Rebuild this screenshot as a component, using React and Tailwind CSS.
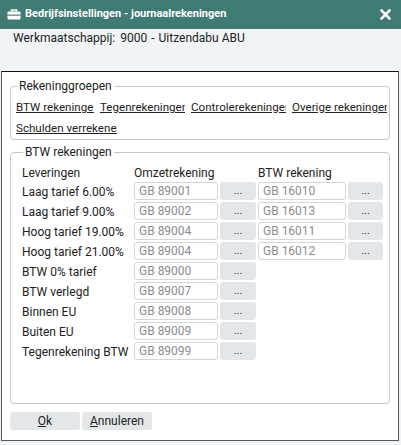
import React from "react";

const rows = [
  ["Laag tarief 6.00%", "GB 89001", "GB 16010"],
  ["Laag tarief 9.00%", "GB 89002", "GB 16013"],
  ["Hoog tarief 19.00%", "GB 89004", "GB 16011"],
  ["Hoog tarief 21.00%", "GB 89004", "GB 16012"],
  ["BTW 0% tarief", "GB 89000", null],
  ["BTW verlegd", "GB 89007", null],
  ["Binnen EU", "GB 89008", null],
  ["Buiten EU", "GB 89009", null],
  ["Tegenrekening BTW", "GB 89099", null],
];

function Input({ value, w }) {
  return (
    <div
      className={`${w} h-[18px] border border-[#d4d7da] rounded-[3px] bg-white pl-[4px] text-[#8a8d90] leading-[16px] text-[12px]`}
    >
      {value}
    </div>
  );
}

function Dots({ w }) {
  return (
    <div className={`${w} h-[18px] rounded-[3px] bg-[#e3e7ea] flex items-center justify-center text-[#333] text-[11px] leading-[16px]`}>
      ...
    </div>
  );
}

function Link({ w, children }) {
  return (
    <span className={`${w} inline-block overflow-hidden whitespace-nowrap underline text-[#222] leading-[16px] text-[11.6px]`}>
      {children}
    </span>
  );
}

export default function App() {
  return (
    <div
      className="w-[401px] h-[445px] bg-[#f1f4f7] text-[12px] text-[#222] overflow-hidden"
      style={{ fontFamily: "Roboto, 'Liberation Sans', sans-serif" }}
    >
      <div className="h-[29px] bg-[#3f7a73] flex items-center pl-[7px] pr-[10px] text-white">
        <svg width="14" height="11" viewBox="0 0 14 11" className="mr-[4px]">
          <path d="M4.5 2.5 V1 H9.5 V2.5" fill="none" stroke="white" strokeWidth="1.6" />
          <rect x="0.5" y="2.5" width="13" height="8" rx="1" fill="white" />
          <rect x="0.5" y="5.6" width="13" height="1.1" fill="#3f7a73" />
        </svg>
        <span className="font-bold text-[11px] flex-1">Bedrijfsinstellingen - journaalrekeningen</span>
        <svg width="11" height="11" viewBox="0 0 11 11">
          <path d="M1.5 1.5 L9.5 9.5 M9.5 1.5 L1.5 9.5" stroke="white" strokeWidth="2.6" strokeLinecap="square" />
        </svg>
      </div>
      <div className="h-[42px] pl-[13px] pt-[1px] leading-[16px] flex text-[#222]">
        <span>Werkmaatschappij:</span>
        <span className="ml-[5px]">9000</span>
        <span className="ml-[4px]">-</span>
        <span className="ml-[4px]">Uitzendabu ABU</span>
      </div>
      <div className="ml-[1px] w-[398px] h-[370px] border border-[#555] border-t-[#111] bg-white px-[8px] pt-[6px]">
        <fieldset className="h-[62px] border border-[#c8c8c8] rounded-[4px] pl-[5px] pr-[2px]">
          <legend className="px-[2px] ml-[1px] leading-[16px]">Rekeninggroepen</legend>
          <div className="flex gap-[6px] mt-[5px]">
            <Link w="w-[78px]">BTW rekeningen</Link>
            <Link w="w-[85px]">Tegenrekeningen</Link>
            <Link w="w-[95px]">Controlerekeningen</Link>
            <Link w="w-[95px]">Overige rekeningen</Link>
          </div>
          <div className="flex mt-[5px]">
            <Link w="w-[101px]">Schulden verrekenen</Link>
          </div>
        </fieldset>
        <fieldset className="mt-[4px] h-[260px] border border-[#c8c8c8] rounded-[4px] pl-[11px]">
          <legend className="px-[2px] ml-[1px] leading-[16px]">BTW rekeningen</legend>
          <div className="flex mt-[5px] leading-[16px]">
            <div className="w-[112px]">Leveringen</div>
            <div className="w-[124px]">Omzetrekening</div>
            <div>BTW rekening</div>
          </div>
          <div className="flex flex-col gap-[2px] mt-[1px]">
            {rows.map(([label, a, b]) => (
              <div key={label} className="flex items-center gap-[2px] h-[18px]">
                <div className="w-[110px] leading-[16px] pt-[1px] whitespace-nowrap">{label}</div>
                <Input value={a} w="w-[84px]" />
                <Dots w="w-[36px]" />
                {b && <Input value={b} w="w-[88px]" />}
                {b && <Dots w="w-[35px]" />}
              </div>
            ))}
          </div>
        </fieldset>
        <div className="flex gap-[2px] mt-[8px]">
          <button className="w-[70px] h-[18px] rounded-[3px] bg-[#e3e7ea] text-[12px] leading-[16px] text-[#222]">
            <span className="underline">O</span>k
          </button>
          <button className="w-[70px] h-[18px] rounded-[3px] bg-[#e3e7ea] text-[12px] leading-[16px] text-[#222]">
            <span className="underline">A</span>nnuleren
          </button>
        </div>
      </div>
    </div>
  );
}
